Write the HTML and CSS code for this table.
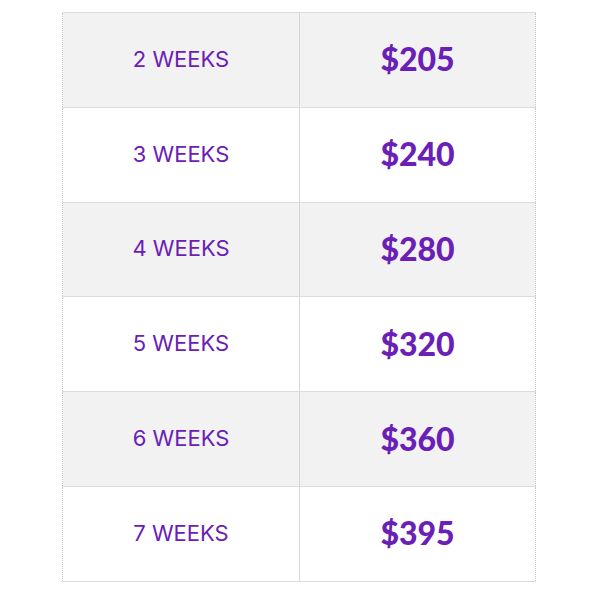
FILE: index.html
```html
<!DOCTYPE html>
<html>
<head>
<meta charset="utf-8">
<link rel="stylesheet" href="styles.css">
</head>
<body>
<table class="prices">
  <tr class="shade"><td class="weeks">2 WEEKS</td><td class="price">$205</td></tr>
  <tr><td class="weeks">3 WEEKS</td><td class="price">$240</td></tr>
  <tr class="shade"><td class="weeks">4 WEEKS</td><td class="price">$280</td></tr>
  <tr><td class="weeks">5 WEEKS</td><td class="price">$320</td></tr>
  <tr class="shade"><td class="weeks">6 WEEKS</td><td class="price">$360</td></tr>
  <tr><td class="weeks">7 WEEKS</td><td class="price">$395</td></tr>
</table>
</body>
</html>
```
FILE: styles.css
```css
html, body {
  margin: 0;
  padding: 0;
  background: #fff;
}
body {
  padding: 12px 0 0 62px;
}
.prices {
  border-collapse: collapse;
  width: 474px;
  border: 1px dotted #c8c8c8;
}
.prices td {
  height: 91.8px;
  padding: 0 0 2px 0;
  text-align: center;
  vertical-align: middle;
  border-top: 1px solid #dcdcdc;
  border-bottom: 1px solid #dcdcdc;
  color: #6a20b6;
}
.prices tr.shade td {
  background: #f2f2f2;
}
.prices td.weeks {
  width: 236px;
  font-family: Inter, "Noto Sans", sans-serif;
  font-size: 22px;
  font-weight: 400;
  border-left: 1px dotted #c8c8c8;
  border-right: 1px solid #d6d6d6;
}
.prices td.price {
  font-family: "Lato", "Open Sans", sans-serif;
  font-size: 32px;
  font-weight: 900;
  border-right: 1px dotted #c8c8c8;
}
```
